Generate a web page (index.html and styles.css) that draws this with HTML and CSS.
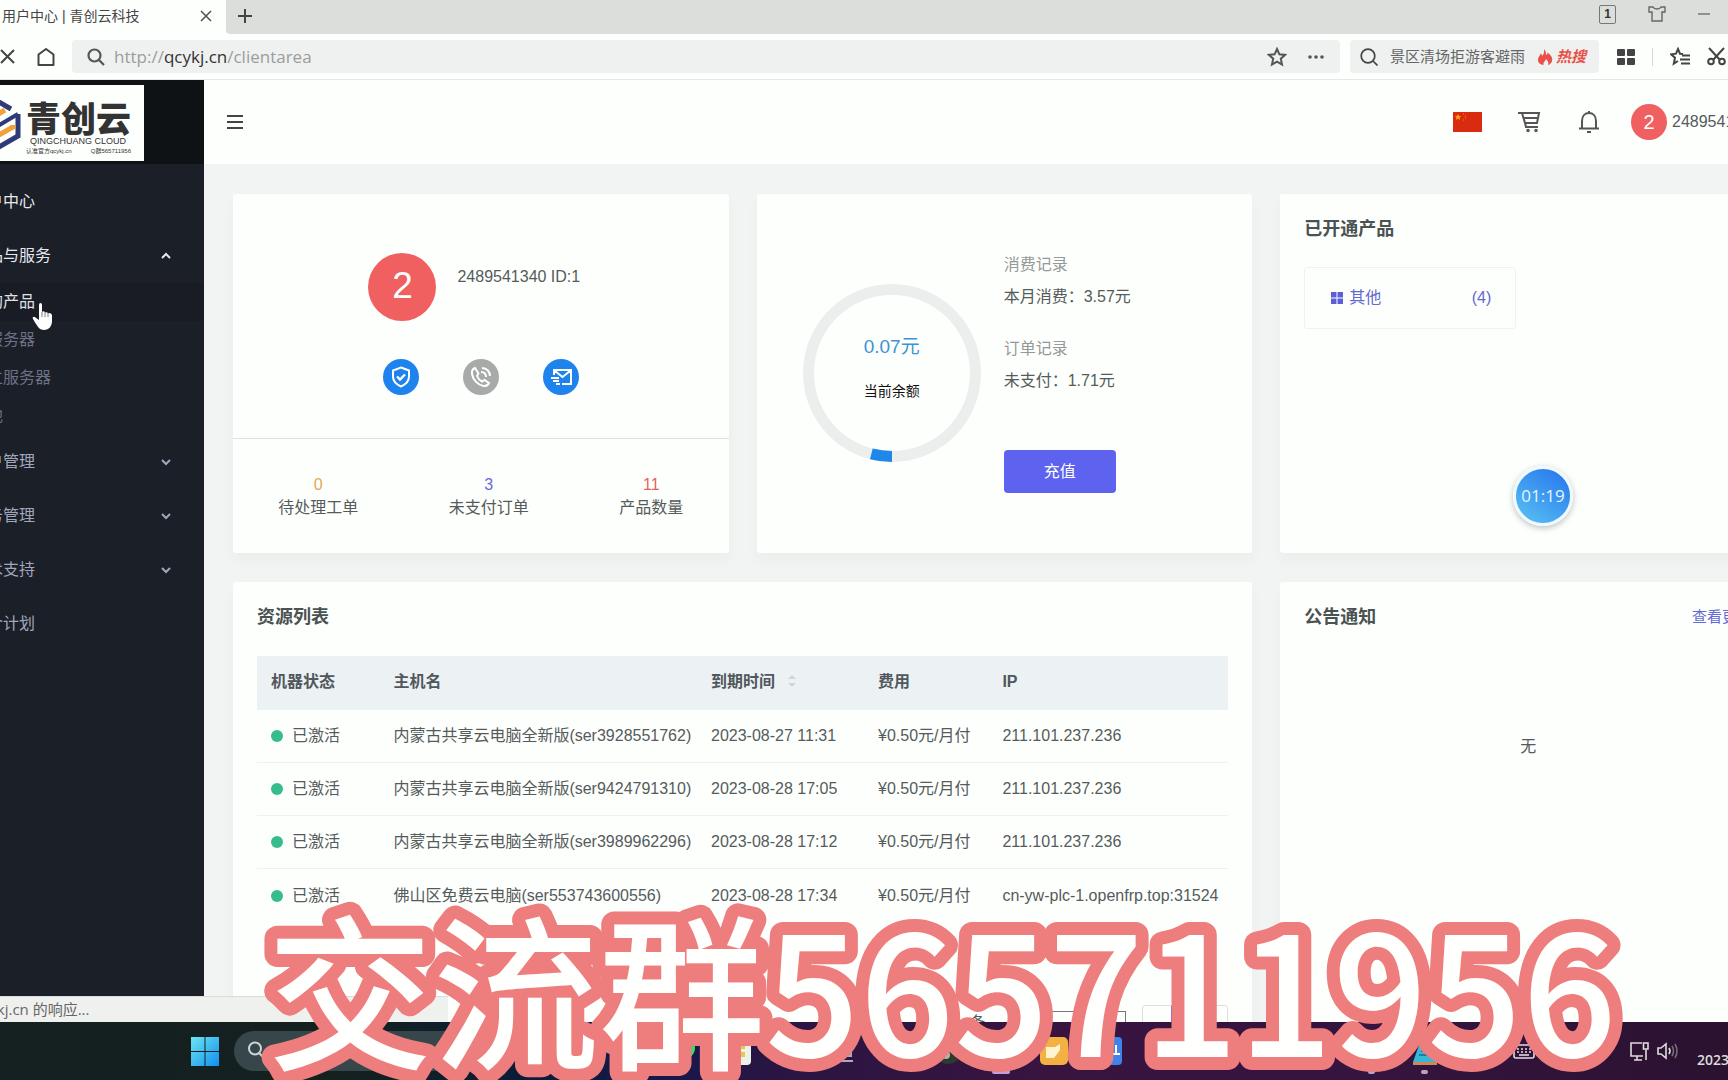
FILE: index.html
```html
<!DOCTYPE html>
<html lang="zh-CN">
<head>
<meta charset="utf-8">
<title>用户中心 | 青创云科技</title>
<link rel="stylesheet" href="styles.css">
</head>
<body>
<header class="browser">
  <div class="tabs">
    <div class="tab"><span>用户中心 | 青创云科技</span>
      <button class="plain" aria-label="关闭标签"><svg width="12" height="12" viewBox="0 0 12 12"><path d="M1 1l10 10M11 1L1 11" stroke="#555" stroke-width="1.6"/></svg></button>
    </div>
    <div class="tab-rest">
      <button class="plain" aria-label="新标签"><svg width="16" height="16" viewBox="0 0 16 16"><path d="M8 1v14M1 8h14" stroke="#444" stroke-width="2"/></svg></button>
      <div class="window-tools">
        <span class="count">1</span>
        <svg width="18" height="18" viewBox="0 0 18 18" fill="none" stroke="#666" stroke-width="1.4"><path d="M1 2h4q1 2 4 2t4-2h4v5h-3v9H4V7H1z"/></svg>
        <svg width="12" height="18" viewBox="0 0 12 18"><path d="M0 9h12" stroke="#777" stroke-width="1.5"/></svg>
      </div>
    </div>
  </div>
  <div class="toolbar">
    <button class="plain" aria-label="停止"><svg width="16" height="16" viewBox="0 0 16 16"><path d="M1 1l13 13M14 1L1 14" stroke="#444" stroke-width="2"/></svg></button>
    <button class="plain home" aria-label="主页"><svg width="18" height="18" viewBox="0 0 18 18" fill="none" stroke="#444" stroke-width="2"><path d="M1.500 6.500L9 1l7.500 5.500V17h-15z" stroke-linejoin="round"/></svg></button>
    <div class="address">
      <svg width="18" height="18" viewBox="0 0 18 18" fill="none" stroke="#555" stroke-width="2.200"><circle cx="7.500" cy="7.500" r="6"/><path d="M12 12l5 5"/></svg>
      <span class="url">http://<b>qcykj.cn</b>/clientarea</span>
      <svg width="20" height="20" viewBox="0 0 20 20" fill="none" stroke="#555" stroke-width="2"><path d="M10 2l2.400 5.300 5.600.6-4.200 3.800 1.200 5.800L10 14.600 5 17.500l1.200-5.800L2 7.900l5.600-.6z"/></svg>
      <svg width="18" height="6" viewBox="0 0 18 6" fill="#555"><circle cx="3" cy="3" r="1.800"/><circle cx="9" cy="3" r="1.800"/><circle cx="15" cy="3" r="1.800"/></svg>
    </div>
    <div class="hot-search">
      <svg width="18" height="18" viewBox="0 0 18 18" fill="none" stroke="#444" stroke-width="1.700"><circle cx="8" cy="8" r="6.800"/><path d="M13 13l4.500 4.500"/></svg>
      <span>景区清场拒游客避雨</span>
      <a href="#hot"><svg width="16" height="18" viewBox="0 0 16 18" fill="#e9504a"><path d="M7 1c2 2 2 4 2 6 1 0 1.500-1 1.500-2.500C14 7 16 10 15 13c-.6 2-2 3.500-4 4 1-2 0-4-2-6-.5 2-3 3-2.500 6-3-.5-5.500-2-5.500-5C1 9 3 8 3.500 5.500 4.500 6 5 7 5 8c2-2 2.500-4 2-7z"/></svg>热搜</a>
    </div>
    <div class="extras">
      <svg width="18" height="18" viewBox="0 0 18 18" fill="#444"><rect x="0" y="1" width="8" height="7" rx="1"/><rect x="10" y="1" width="8" height="7" rx="1"/><rect x="0" y="10" width="8" height="7" rx="1"/><rect x="10" y="10" width="8" height="7" rx="1"/></svg>
      <i class="bar"></i>
      <svg width="20" height="20" viewBox="0 0 20 20" fill="none" stroke="#444" stroke-width="2"><path d="M13 7l-3-.3L8 2 6 6.700l-5 .6 4 3.400-1.200 6L8 14"/><path d="M12 8.500h8M10 12.500h10M11 16.500h9"/></svg>
      <svg width="19" height="19" viewBox="0 0 19 19" fill="none" stroke="#444" stroke-width="2"><path d="M2 1l11 12M17 1L6 13"/><circle cx="4" cy="14.500" r="2.800"/><circle cx="15" cy="14.500" r="2.800"/></svg>
    </div>
  </div>
</header>

<div class="viewport">
  <div class="app">
    <aside class="sidebar">
      <div class="brand">
        <div class="logo">
          <svg width="52" height="56" viewBox="0 0 52 56" fill="none" stroke-width="5"><path d="M6 16L28 4l14 8M49 17v22L28 51 6 40V16" stroke="#2f3a78"/><path d="M49 17L27 30v20" stroke="#2f3a78" stroke-width="4"/><path d="M26 19l10-6M28 39l16-9v-2" stroke="#f0a13a"/></svg>
          <div class="logo-text">
            <strong>青创云</strong>
            <span>QINGCHUANG CLOUD</span>
            <small><em>认准官方qcykj.cn</em><em>Q群565711956</em></small>
          </div>
        </div>
      </div>
      <nav class="menu">
        <a href="#home" class="lit">用户中心</a>
        <a href="#products" class="lit">产品与服务<svg width="10" height="10" viewBox="0 0 10 10"><path d="M1 7l4-4 4 4"/></svg></a>
        <div class="sub">
          <a href="#buy" class="active">订购产品</a>
          <a href="#cloud">云服务器</a>
          <a href="#server">独立服务器</a>
          <a href="#other">其他</a>
        </div>
        <a href="#account">账户管理<svg width="10" height="10" viewBox="0 0 10 10"><path d="M1 3l4 4 4-4"/></svg></a>
        <a href="#finance">财务管理<svg width="10" height="10" viewBox="0 0 10 10"><path d="M1 3l4 4 4-4"/></svg></a>
        <a href="#support">技术支持<svg width="10" height="10" viewBox="0 0 10 10"><path d="M1 3l4 4 4-4"/></svg></a>
        <a href="#plan">推介计划</a>
      </nav>
    </aside>

    <div class="main">
      <div class="topbar">
        <button class="plain" aria-label="菜单"><svg width="18" height="16" viewBox="0 0 18 16"><path d="M1 2h16M1 8h16M1 14h16" stroke="#444" stroke-width="2"/></svg></button>
        <div class="account">
          <svg width="29" height="20" viewBox="0 0 29 20"><rect width="29" height="20" fill="#d92b0f"/><path d="M5 2l1 2h2L6.500 5.500 7 8 5 6.500 3 8l.5-2.500L2 4h2z" fill="#f7a51b"/><path d="M10 2h1M12 4h1M12 6h1M10 8h1" stroke="#f0861b"/></svg>
          <svg width="24" height="22" viewBox="0 0 24 22" fill="none" stroke="#555" stroke-width="2"><path d="M0 2h21l-2 10H7L4 2M7 12l1 4h12M6 7h13"/><circle cx="10" cy="19.500" r=".8"/><circle cx="18" cy="19.500" r=".8"/></svg>
          <svg width="22" height="24" viewBox="0 0 22 24" fill="none" stroke="#555" stroke-width="2"><path d="M11 1v2M4 18V11c0-5 3-8 7-8s7 3 7 8v7M1 18.500h20M9 22h4"/></svg>
          <div class="me"><span class="avatar small">2</span><span>2489541340</span></div>
        </div>
      </div>

      <div class="cards">
        <section class="card profile">
          <div class="profile-top">
            <div class="who"><span class="avatar">2</span><span class="name">2489541340 ID:1</span></div>
            <div class="badges">
              <i class="badge"><svg width="20" height="22" viewBox="0 0 20 22"><path d="M10 1.500l8 3v6c0 5-3.500 8-8 10-4.500-2-8-5-8-10v-6z"/><path d="M6 10.500l3 3 5-5" stroke-width="2.400"/></svg></i>
              <i class="badge off"><svg width="22" height="22" viewBox="0 0 22 22"><path d="M5 2C2.500 3 1.500 5 2 8c1 6 6 11 11.500 12 3 .3 4.500-.8 5.500-3l-4.500-3-2.500 1.500C10 14.500 8 12.500 7 10l1.500-2.500z"/><path d="M11 6c3 0 5 2 5 5M12 2c5 0 8 4 8 8"/></svg></i>
              <i class="badge"><svg width="22" height="18" viewBox="0 0 22 18"><path d="M4 7V2h17v14h-9M5 3l7.500 6L20 3M1 10h8M3 13h6M6 16h4"/></svg></i>
            </div>
          </div>
          <div class="stats">
            <div><b class="amber">0</b><span>待处理工单</span></div>
            <div><b class="indigo">3</b><span>未支付订单</span></div>
            <div><b class="red">11</b><span>产品数量</span></div>
          </div>
        </section>

        <section class="card balance">
          <div class="ring">
            <svg viewBox="0 0 178 178" fill="none" stroke-width="11"><circle cx="89" cy="89" r="83.500" stroke="#eceeed"/><circle cx="89" cy="89" r="83.500" stroke="#1e88ea" pathLength="100" stroke-dasharray="4 96" transform="rotate(90 89 89)"/></svg>
            <strong>0.07元</strong><span>当前余额</span>
          </div>
          <div class="records">
            <dl>
              <dt>消费记录</dt><dd>本月消费：3.57元</dd>
              <dt>订单记录</dt><dd>未支付：1.71元</dd>
            </dl>
            <button class="pay">充值</button>
          </div>
        </section>

        <section class="card">
          <h2>已开通产品</h2>
          <a class="product" href="#other"><svg width="12" height="12" viewBox="0 0 12 12" fill="#5c60d6"><path d="M0 0h5.500v5.500H0zM6.500 0H12v5.500H6.500zM0 6.500h5.500V12H0zM6.500 6.500H12V12H6.500z"/></svg>其他<span>(4)</span></a>
        </section>

        <section class="card resources">
          <h2>资源列表</h2>
          <table>
            <colgroup><col class="c1"><col class="c2"><col class="c3"><col class="c4"><col></colgroup>
            <thead><tr><th>机器状态</th><th>主机名</th><th>到期时间<svg class="sort" width="8" height="14" viewBox="0 0 8 14" fill="#cfd6d6"><path d="M0 5l4-4 4 4zM0 9l4 4 4-4z"/></svg></th><th>费用</th><th>IP</th></tr></thead>
            <tbody>
              <tr><td><i class="dot"></i>已激活</td><td>内蒙古共享云电脑全新版(ser3928551762)</td><td>2023-08-27 11:31</td><td>¥0.50元/月付</td><td>211.101.237.236</td></tr>
              <tr><td><i class="dot"></i>已激活</td><td>内蒙古共享云电脑全新版(ser9424791310)</td><td>2023-08-28 17:05</td><td>¥0.50元/月付</td><td>211.101.237.236</td></tr>
              <tr><td><i class="dot"></i>已激活</td><td>内蒙古共享云电脑全新版(ser3989962296)</td><td>2023-08-28 17:12</td><td>¥0.50元/月付</td><td>211.101.237.236</td></tr>
              <tr><td><i class="dot"></i>已激活</td><td>佛山区免费云电脑(ser553743600556)</td><td>2023-08-28 17:34</td><td>¥0.50元/月付</td><td>cn-yw-plc-1.openfrp.top:31524</td></tr>
            </tbody>
          </table>
          <div class="pager">
            <label for="size">条</label>
            <select id="size"><option>5</option></select>
            <div class="pages"><button>‹</button><button class="on">1</button><button>›</button></div>
          </div>
        </section>

        <section class="card notices">
          <div class="notice-head"><h2>公告通知</h2><a href="#more">查看更多</a></div>
          <p>无</p>
        </section>
      </div>
    </div>
  </div>
  <div class="status"><span>正在等待 qcykj.cn 的响应...</span></div>
</div>

<footer class="taskbar">
  <svg class="start" width="28" height="29" viewBox="0 0 28 29"><defs><linearGradient id="win" x1="0" y1="0" x2="1" y2="1"><stop offset="0" stop-color="#6fe6f0"/><stop offset="1" stop-color="#0f8ff0"/></linearGradient></defs><path d="M0 0h13.500v14H0zM14.500 0H28v14H14.500zM0 15h13.500v14H0zM14.500 15H28v14H14.500z" fill="url(#win)"/></svg>
  <div class="task-search"><svg width="18" height="18" viewBox="0 0 18 18" fill="none" stroke="#cfd6d6" stroke-width="2"><circle cx="8" cy="7.500" r="6"/><path d="M12 12l4 4"/></svg></div>
  <div class="pins">
    <i class="pin p1"><svg width="32" height="28" viewBox="0 0 32 28"><circle cx="17" cy="11" r="11" fill="#3fd66b"/></svg></i>
    <i class="pin p2"><svg width="30" height="28" viewBox="0 0 30 28"><rect width="30" height="28" rx="4" fill="#eef0ea"/><path d="M14 7h10v5H14zM14 15h10v5H14z" fill="#e5c84e"/></svg></i>
    <i class="pin p4"><svg width="28" height="28" viewBox="0 0 28 28" fill="none" stroke="#aab" stroke-width="2"><rect x="3" y="5" width="20" height="14"/><path d="M1 24h24"/></svg></i>
    <i class="pin p6"><svg width="28" height="28" viewBox="0 0 28 28"><circle cx="14" cy="14" r="13" fill="#2d3a30"/><circle cx="12" cy="18" r="4" fill="#aeb8a8"/></svg></i>
    <i class="pin p7 running"></i>
    <i class="pin p8"><svg width="28" height="28" viewBox="0 0 28 28"><rect width="28" height="28" rx="5" fill="#f3b043"/><path d="M6 10h9l5-3v6l-6 8H6z" fill="#fff3d0"/></svg></i>
    <i class="pin p9"><svg width="30" height="28" viewBox="0 0 30 28"><rect width="30" height="28" rx="4" fill="#3f83ea"/><path d="M20 17h8M24 8v9" stroke="#fff" stroke-width="2"/></svg></i>
    <i class="pin p14 running"></i>
    <i class="pin p15 running"><svg width="24" height="28" viewBox="0 0 24 28"><path d="M6 8h14l4 17H0z" fill="#38b6d6"/><path d="M8 14h12M6 18h16" stroke="#17698a" stroke-width="1.500"/><path d="M0 25h24v3H0z" fill="#c98a5a"/></svg></i>
  </div>
  <div class="tray">
    <svg width="22" height="18" viewBox="0 0 22 18" fill="none" stroke="#ddd" stroke-width="1.600"><rect x="1" y="3" width="20" height="13" rx="2"/><path d="M4 7h14M4 10h14" stroke-dasharray="2 2"/><path d="M6 13h10"/></svg>
    <svg class="net" width="20" height="20" viewBox="0 0 20 20" fill="none" stroke="#ddd" stroke-width="1.600"><path d="M13 2H2v13h12M5 19h8M8 15v4M17 9v10"/><rect x="14.500" y="2" width="4.500" height="6"/></svg>
    <svg width="22" height="18" viewBox="0 0 22 18" fill="none" stroke="#ddd" stroke-width="1.600"><path d="M1 6h3l5-4v14l-5-4H1z"/><path d="M12 6q2 3 0 6"/><path d="M15 4q3 5 0 10M18 2q4 7 0 14" stroke="#776a7a"/></svg>
    <time>2023/8/27</time>
  </div>
</footer>

<div class="timer">01:19</div>
<svg class="hand" width="22" height="28" viewBox="0 0 22 28" fill="#fff"><path d="M7 2q0-2 1.500-2T10 2v7q2-1.500 3 .5 2-1 3 .7 3-.7 4 1.800V18c0 5-3 9-8 9-4 0-6-3-8-6l-3-5c-1-2 1-3 2.500-1.500L7 17z"/><path d="M10 9v5M13 9.500V14M16 10v4" stroke="#555" stroke-width=".8"/></svg>
<svg class="caption" width="1400" height="190" viewBox="0 0 1400 190"><text x="0" y="149">交流群565711956</text></svg>
</body>
</html>
```
FILE: styles.css
```css
* { box-sizing: border-box; }
body {
  margin: 0;
  height: 100vh;
  display: flex;
  flex-direction: column;
  position: relative;
  overflow: hidden;
  font: 16px/24px "Liberation Sans", "Noto Sans CJK SC", sans-serif;
  color: #555b5b;
  background: #fdfffd;
}
a { text-decoration: none; color: inherit; }
i { font-style: normal; }
svg { flex: none; display: block; }
.plain { border: 0; padding: 0; background: none; flex: none; }

/* browser window */
.browser { flex: none; }
.tabs { display: flex; height: 34px; }
.tab { width: 226px; display: flex; align-items: center; justify-content: space-between; padding: 0 14px 2px 2px; font-size: 14px; color: #444; }
.tab-rest { flex: 1; display: flex; justify-content: space-between; padding: 0 18px 2px 11px; background: #dcdedc; border-bottom-left-radius: 4px; align-items: center; }
.window-tools { display: flex; align-items: center; gap: 32px; padding-bottom: 4px; }
.count { width: 17px; height: 19px; border: 1px solid #777; border-radius: 2px; font-size: 12px; line-height: 17px; text-align: center; color: #333; font-weight: bold; }
.toolbar { display: flex; align-items: center; height: 46px; border-bottom: 1px solid #e4e7e5; }
.home { margin: 0 17px 0 21px; }
.address { flex: 1; display: flex; align-items: center; gap: 20px; height: 33px; padding: 0 15px; background: #eef1ef; border-radius: 4px; }
.url { flex: 1; margin-left: -11px; font-family: "Open Sans", sans-serif; font-size: 17px; color: #9a9e9c; }
.url b { font-weight: normal; color: #333; }
.hot-search { display: flex; align-items: center; width: 249px; height: 33px; margin-left: 10px; padding-left: 10px; background: #eef1ef; border-radius: 4px; font-size: 15px; color: #666; white-space: nowrap; }
.hot-search span { margin: 0 12px; }
.hot-search a { display: flex; align-items: center; gap: 3px; color: #e9504a; font-weight: bold; font-style: italic; }
.extras { display: flex; align-items: center; gap: 17px; margin: 0 2px 0 18px; }
.bar { width: 1px; height: 18px; background: #d5d8d6; }

/* the client area is scrolled sideways inside its window */
.viewport { flex: 1; min-height: 0; position: relative; overflow: hidden; background: #f2f4f4; }
.app { display: flex; height: 100%; margin: 0 -77px 0 -46px; }
.sidebar { width: 250px; flex: none; background: #1b1f27; }
.brand { height: 84px; background: #0f1214; padding-top: 5px; }
.logo { width: 190px; height: 76px; background: #fdfffd; display: flex; padding: 12px 0 0 15px; gap: 5px; }
.logo-text { display: flex; flex-direction: column; color: #333; white-space: nowrap; padding-top: 2px; }
.logo-text strong { font: 900 35px/36px "Noto Sans CJK SC", sans-serif; }
.logo-text span { font-size: 9px; line-height: 12px; padding-left: 4px; }
.logo-text small { font-size: 6px; line-height: 8px; display: flex; justify-content: space-between; }
.logo-text em { font-style: normal; }
.menu { padding-top: 11px; color: #a2a6bb; }
.menu a { display: flex; align-items: center; justify-content: space-between; height: 54px; padding: 0 33px 0 17px; }
.menu .lit { color: #e6e8ee; }
.menu svg { fill: none; stroke: currentColor; stroke-width: 2; }
.menu .sub { color: #6d7185; }
.menu .sub a { height: 38px; }
.menu .sub .active { color: #dfe1e6; background: #191c25; }

.main { flex: 1; min-width: 0; }
.topbar { height: 84px; display: flex; align-items: center; justify-content: space-between; padding: 0 44px 0 22px; background: #fdfffd; }
.account { display: flex; align-items: center; gap: 36px; }
.me { display: flex; align-items: center; gap: 5px; margin-left: -5px; }
.avatar { width: 68px; height: 68px; border-radius: 50%; background: #f06060; color: #fff; font-size: 37px; line-height: 66px; text-align: center; }
.avatar.small { width: 36px; height: 36px; font-size: 20px; line-height: 36px; }

.cards { display: grid; grid-template-columns: repeat(3, 1fr); gap: 29px 28px; padding: 30px 29px 29px; }
.card { background: #fdfffd; padding: 21px 24px; border-radius: 3px; box-shadow: 0 8px 16px rgba(20, 30, 40, .03); }
h2 { margin: 0; font-size: 18px; line-height: 28px; font-weight: 700; color: #4b5252; }

.profile { padding: 0; }
.profile-top { padding: 59px 0 43px; border-bottom: 1px solid #dfe2e1; }
.who { display: flex; justify-content: center; gap: 21px; padding-right: 13px; }
.name { padding-top: 12px; }
.badges { display: flex; justify-content: center; gap: 44px; padding-top: 38px; }
.badge { width: 36px; height: 36px; border-radius: 50%; background: #1e83ec; display: flex; align-items: center; justify-content: center; }
.badge.off { background: #a8aaa9; }
.badge svg { fill: none; stroke: #fff; stroke-width: 2; }
.stats { display: flex; justify-content: space-around; padding: 34px 0; text-align: center; }
.stats b, .stats span { display: block; font-weight: normal; line-height: 23px; }
.amber { color: #e3a857; }
.indigo { color: #6a68dd; }
.red { color: #e9605c; }

.balance { display: flex; gap: 23px; padding: 55px 46px 53px; }
.ring { position: relative; width: 178px; height: 178px; margin-top: 35px; padding-bottom: 8px; display: flex; flex-direction: column; align-items: center; justify-content: center; gap: 20px; flex: none; }
.ring svg { position: absolute; inset: 0; }
.ring strong { font-size: 19px; font-weight: normal; color: #3d93d3; }
.ring span { font-size: 14px; color: #111; }
.records dl { margin: 0 0 53px; line-height: 32px; }
.records dt { color: #959998; }
.records dd { margin: 0; }
.records dd + dt { margin-top: 20px; }
.pay { width: 112px; height: 43px; border: 0; border-radius: 4px; background: #5d62ef; color: #fff; font: inherit; }

.product { display: flex; align-items: center; gap: 6px; width: 212px; height: 62px; margin-top: 24px; padding: 0 24px 0 26px; border: 1px solid #f0f2f1; border-radius: 3px; color: #6468cf; }
.product span { margin-left: auto; }

.resources { grid-column: span 2; }
table { width: 100%; margin-top: 25px; table-layout: fixed; border-collapse: separate; border-spacing: 0; white-space: nowrap; }
.c1 { width: 12.6%; }
.c2 { width: 32.7%; }
.c3 { width: 17.2%; }
.c4 { width: 12.8%; }
th { height: 54px; padding: 0 14px 2px; background: #ecf2f4; text-align: left; font-weight: 700; color: #50585d; }
td { height: 53px; padding: 0 14px; border-bottom: 1px solid #eff1f0; }
tr:last-child td { border-bottom: 0; }
.sort { display: inline-block; margin-left: 13px; vertical-align: -1px; }
.dot { display: inline-block; width: 12px; height: 12px; margin-right: 9px; border-radius: 50%; background: #36bd8b; vertical-align: -1px; }
.pager { display: flex; justify-content: flex-end; gap: 16px; padding-top: 83px; font-size: 15px; }
.pager label { padding: 5px 50px 0 0; }
.pager select { width: 75px; height: 34px; margin-top: 6px; background: #fdfffd; border: 1px solid #777; font: inherit; color: #555; appearance: none; }
.pages { display: flex; border: 1px solid #dcdfe2; border-radius: 3px; }
.pages button { width: 28px; height: 34px; border: 0; background: none; color: #999; padding: 0; }
.pages .on { background: #5d62ef; color: #fff; }

.notice-head { display: flex; justify-content: space-between; align-items: center; }
.notice-head a { font-size: 15px; color: #6468d8; }
.notices p { margin: 104px 0 0; text-align: center; }

.status { position: absolute; left: 0; bottom: 0; width: 448px; height: 26px; border-top: 1px solid #d8dbd9; background: #eff1ef; overflow: hidden; white-space: nowrap; font: 15px/25px "Open Sans", "Noto Sans CJK SC", sans-serif; color: #666; }
.status span { margin-left: -91px; }

/* desktop taskbar */
.taskbar { flex: none; height: 58px; display: flex; align-items: center; padding-left: 191px; overflow: hidden; background: linear-gradient(90deg, #152021 0, #13211f 20%, #0c1c36 30%, #15184c 38%, #2a1542 45%, #38143f 60%, #361440 78%, #2b1230 100%); }
.task-search { flex: none; width: 240px; height: 40px; margin-left: 15px; padding: 10px 13px; border-radius: 20px; background: #36464a; }
.pins { display: grid; grid-template-columns: repeat(15, 53px); margin-left: 182px; height: 58px; flex: none; }
.pin { grid-row: 1; display: flex; align-items: center; justify-content: center; position: relative; }
.p2 { grid-column: 2; }
.p4 { grid-column: 4; }
.p6 { grid-column: 6; }
.p7 { grid-column: 7; }
.p8 { grid-column: 8; }
.p9 { grid-column: 9; }
.p14 { grid-column: 14; }
.p15 { grid-column: 15; }
.running::after { content: ""; position: absolute; bottom: 6px; width: 7px; height: 4px; border-radius: 2px; background: #b9a4c4; }
.p7::after { width: 18px; background: #c79be0; }
.tray { display: flex; align-items: center; margin-left: 62px; color: #ddd; gap: 8px; flex: none; }
.net { margin-left: 86px; }
.tray time { margin-left: 10px; padding-top: 18px; font: 14px/20px "Open Sans", sans-serif; font-weight: 600; }

/* overlays */
.timer { position: absolute; left: 1513px; top: 466px; width: 60px; height: 60px; border: 3px solid #effaff; border-radius: 50%; background: linear-gradient(215deg, #2a7bec 10%, #3f9bf0 50%, #5cc4f2); box-shadow: 0 2px 6px rgba(0, 0, 0, .25); color: #e2f6ff; font: 17px/54px "Open Sans", sans-serif; text-align: center; }
.hand { position: absolute; left: 32px; top: 303px; }
.caption { position: absolute; left: 267px; top: 908px; overflow: visible; font: 500 166px "Noto Sans CJK SC", sans-serif; fill: #fffffd; stroke: #ee7d7d; stroke-width: 26px; stroke-linejoin: round; paint-order: stroke; }
```
